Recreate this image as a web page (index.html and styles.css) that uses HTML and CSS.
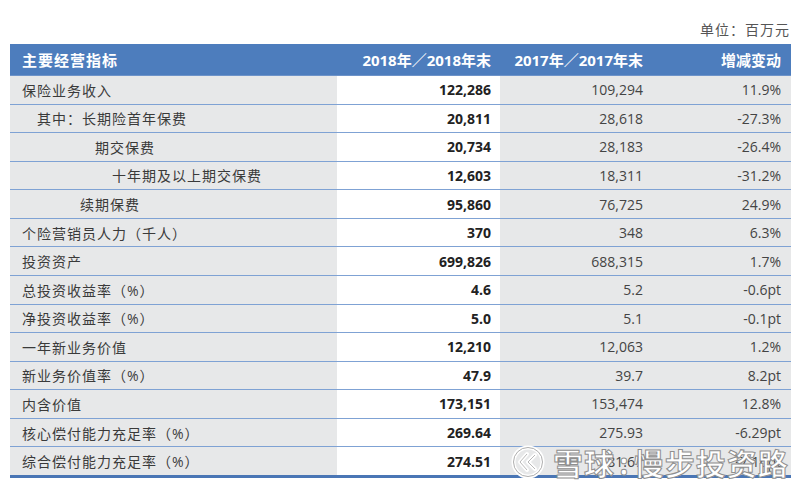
FILE: index.html
```html
<!DOCTYPE html>
<html lang="zh">
<head>
<meta charset="utf-8">
<link rel="stylesheet" href="styles.css">
</head>
<body>
<div class="page">
  <div class="unit">单位：百万元</div>
  <div class="table">
    <div class="row head">
      <div class="c1">主要经营指标</div>
      <div class="c2">2018年／2018年末</div>
      <div class="c3">2017年／2017年末</div>
      <div class="c4">增减变动</div>
    </div>
    <div class="row"><div class="c1">保险业务收入</div><div class="c2">122,286</div><div class="c3">109,294</div><div class="c4">11.9%</div></div>
    <div class="row"><div class="c1 i1">其中：长期险首年保费</div><div class="c2">20,811</div><div class="c3">28,618</div><div class="c4">-27.3%</div></div>
    <div class="row"><div class="c1 i3">期交保费</div><div class="c2">20,734</div><div class="c3">28,183</div><div class="c4">-26.4%</div></div>
    <div class="row"><div class="c1 i4">十年期及以上期交保费</div><div class="c2">12,603</div><div class="c3">18,311</div><div class="c4">-31.2%</div></div>
    <div class="row"><div class="c1 i2">续期保费</div><div class="c2">95,860</div><div class="c3">76,725</div><div class="c4">24.9%</div></div>
    <div class="row"><div class="c1">个险营销员人力（千人）</div><div class="c2">370</div><div class="c3">348</div><div class="c4">6.3%</div></div>
    <div class="row"><div class="c1">投资资产</div><div class="c2">699,826</div><div class="c3">688,315</div><div class="c4">1.7%</div></div>
    <div class="row"><div class="c1">总投资收益率（%）</div><div class="c2">4.6</div><div class="c3">5.2</div><div class="c4">-0.6pt</div></div>
    <div class="row"><div class="c1">净投资收益率（%）</div><div class="c2">5.0</div><div class="c3">5.1</div><div class="c4">-0.1pt</div></div>
    <div class="row"><div class="c1">一年新业务价值</div><div class="c2">12,210</div><div class="c3">12,063</div><div class="c4">1.2%</div></div>
    <div class="row"><div class="c1">新业务价值率（%）</div><div class="c2">47.9</div><div class="c3">39.7</div><div class="c4">8.2pt</div></div>
    <div class="row"><div class="c1">内含价值</div><div class="c2">173,151</div><div class="c3">153,474</div><div class="c4">12.8%</div></div>
    <div class="row"><div class="c1">核心偿付能力充足率（%）</div><div class="c2">269.64</div><div class="c3">275.93</div><div class="c4">-6.29pt</div></div>
    <div class="row last"><div class="c1">综合偿付能力充足率（%）</div><div class="c2">274.51</div><div class="c3">281.67</div><div class="c4">-7.16pt</div></div>
  </div>
  <div class="watermark">
    <svg class="wm-logo" width="34" height="34" viewBox="0 0 34 34">
      <circle cx="17" cy="17" r="14.5" fill="none" stroke="#fff" stroke-width="4"/>
      <circle cx="17" cy="17" r="14.5" fill="none" stroke="#9a9a9a" stroke-width="1" opacity="0.8"/>
      <path d="M16 9 L9 17 L16 25" fill="none" stroke="#fff" stroke-width="4" stroke-linecap="round" stroke-linejoin="round"/>
      <path d="M24 10 L17 17 L24 24" fill="none" stroke="#fff" stroke-width="4" stroke-linecap="round" stroke-linejoin="round"/>
      <path d="M16 9 L9 17 L16 25 M24 10 L17 17 L24 24" fill="none" stroke="#9a9a9a" stroke-width="1" opacity="0.7"/>
    </svg>
    <span class="wm-text">雪球<span class="wm-colon">:</span>慢步投资路</span>
  </div>
</div>
</body>
</html>
```
FILE: styles.css
```css
html, body {
  margin: 0;
  padding: 0;
  background: #ffffff;
}
body {
  font-family: "Open Sans", "Noto Sans CJK SC", sans-serif;
  font-size: 14px;
  color: #333333;
}
.page {
  position: relative;
  width: 800px;
  height: 485px;
  overflow: hidden;
}
.unit {
  height: 20px;
  line-height: 20px;
  padding-top: 20px;
  margin-bottom: 4px;
  padding-right: 10px;
  text-align: right;
  color: #555555;
  letter-spacing: 1px;
}
.table {
  margin-left: 10px;
  width: 781px;
}
.row {
  display: grid;
  grid-template-columns: 327px 163px 155px 136px;
  height: calc(400px / 14);
  box-sizing: border-box;
  border-bottom: 1px solid #7fa2d4;
}
.row > div {
  display: flex;
  align-items: center;
  white-space: nowrap;
}
.row .c1 {
  background: #e7e8e9;
  padding-left: 12px;
  letter-spacing: 1px;
  color: #3a3a3a;
}
.row .c2 {
  background: #ffffff;
  justify-content: flex-end;
  padding-right: 9px;
  font-weight: 700;
  color: #222222;
}
.row .c3 {
  background: #e7e8e9;
  justify-content: flex-end;
  padding-right: 12px;
  color: #444444;
}
.row .c4 {
  background: #e7e8e9;
  justify-content: flex-end;
  padding-right: 10px;
  color: #444444;
}
.row .i1 { padding-left: 27px; }
.row .i2 { padding-left: 70px; }
.row .i3 { padding-left: 85px; }
.row .i4 { padding-left: 102px; }
.row.head {
  height: 32px;
  border-bottom: 1px solid #6d93c9;
}
.row.head > div {
  background: #4d7dbd;
  color: #ffffff;
  font-weight: 700;
  font-size: 15px;
}
.row.head .c1 {
  letter-spacing: 1px;
}
.row.last {
  height: calc(400px / 14 + 2px);
  border-bottom: 3px solid #4a76b5;
}
.watermark {
  position: absolute;
  left: 511px;
  top: 444px;
  display: flex;
  align-items: center;
  gap: 8px;
}
.wm-text {
  font-family: "Noto Sans CJK SC", sans-serif;
  font-size: 30px;
  font-weight: 700;
  color: #ffffff;
  letter-spacing: 1px;
  -webkit-text-stroke: 1px #8f8f8f;
  line-height: 36px;
  white-space: nowrap;
}
.wm-colon {
  display: inline-block;
  margin: 0 4px;
}
```
